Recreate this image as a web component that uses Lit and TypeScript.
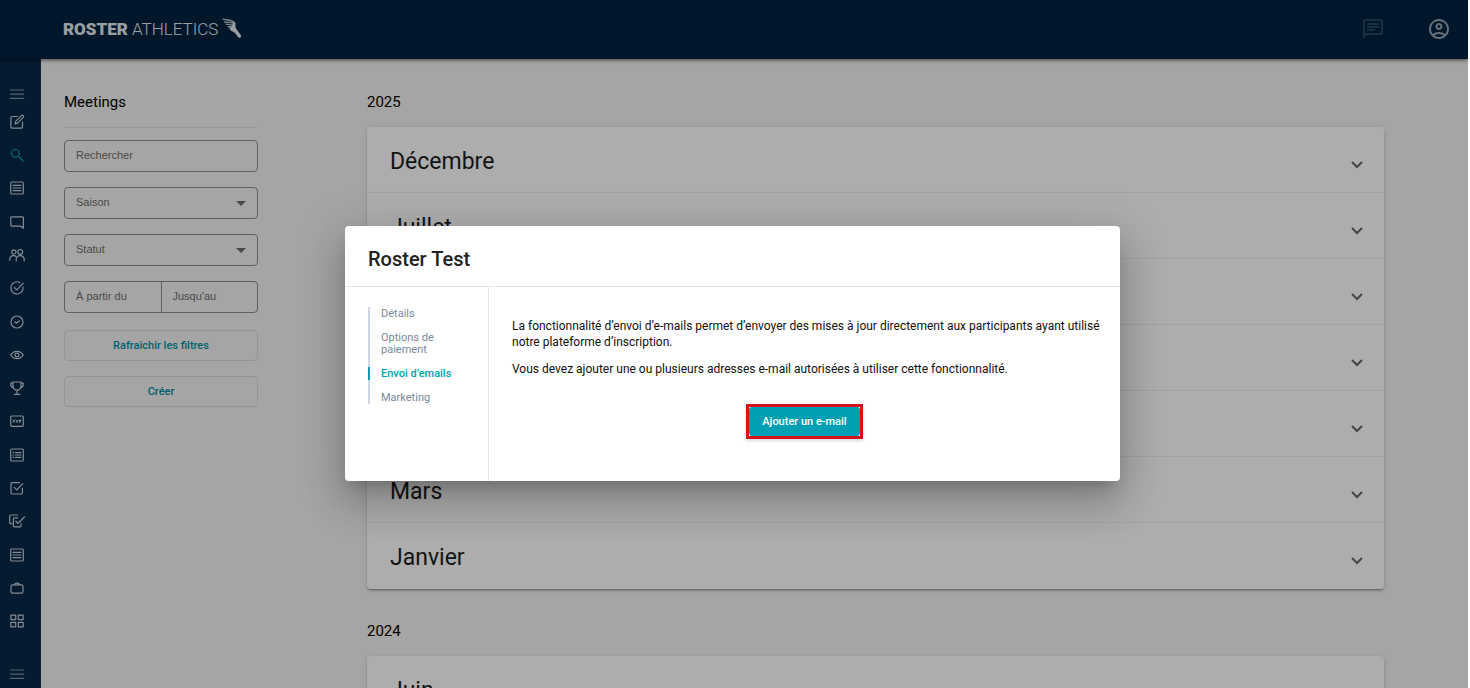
import { LitElement, html, css, svg } from "lit";
import { customElement, property, state } from "lit/decorators.js";
import { classMap } from "lit/directives/class-map.js";

/* Line icons, drawn on a 16 x 16 grid. */
const GLYPHS: Record<string, unknown> = {
  menu: svg`<path d="M1.5 4h13M1.5 8.2h13M1.5 12.4h13"/>`,
  edit: svg`<path d="M8.5 2.5H3.2a1.3 1.3 0 0 0-1.3 1.3v9a1.3 1.3 0 0 0 1.3 1.3h9a1.3 1.3 0 0 0 1.3-1.3V8"/><path d="M12.4 1.6a1.2 1.2 0 0 1 1.8 1.8L8.6 9.2l-2.5.7.6-2.5z"/>`,
  search: svg`<circle cx="6.4" cy="6.4" r="3.9"/><path d="M9.4 9.4l4.6 4.4"/>`,
  list: svg`<rect x="1.7" y="2" width="12.6" height="12" rx="1.3"/><path d="M4 5.4h8M4 8h8M4 10.6h8"/>`,
  chat: svg`<path d="M2.8 2.8h10.6a1 1 0 0 1 1 1v10.4l-2.6-2H2.8a1 1 0 0 1-1-1V3.8a1 1 0 0 1 1-1z"/>`,
  people: svg`<circle cx="4.9" cy="4.9" r="2.1"/><circle cx="11.2" cy="4.9" r="2.4"/><path d="M.7 13.2v-1a3.7 3.7 0 0 1 6.2-2.7M7.2 13.8v-1.2a4 4 0 0 1 8 0v1.2"/>`,
  check: svg`<path d="M14 7.2A6.1 6.1 0 1 1 10.8 2.5"/><path d="M5.4 7.4l2.4 2.4 6.4-6.5"/>`,
  clock: svg`<circle cx="8" cy="8" r="6"/><path d="M5.8 7.8l1.6 1.4 3-2.4"/>`,
  eye: svg`<path d="M1.8 8S4 4.3 8 4.3 14.2 8 14.2 8 12 11.7 8 11.7 1.8 8 1.8 8z"/><circle cx="8" cy="8" r="1.9"/>`,
  trophy: svg`<path d="M4 2h8v4.2a4 4 0 0 1-8 0zM4 3.2H1.8v1.6A2.6 2.6 0 0 0 4.4 7.4M12 3.2h2.2v1.6a2.6 2.6 0 0 1-2.6 2.6M8 10.3v3.8M5.2 14.3h5.6"/>`,
  badge: svg`<rect x="1.7" y="3" width="12.6" height="10.4" rx="1.2"/><path stroke-width="1" d="M4.2 7l1.4 2.2M5.6 7L4.2 9.2M7 7l1 1.4L9 7M8 8.4v1.2M10.4 9.4V7h1.4v1.4h-1.2"/>`,
  bullets: svg`<rect x="1.7" y="2" width="12.6" height="12" rx="1.3"/><path d="M4 5.6h.6M6.4 5.6h5.6M4 8h.6M6.4 8h5.6M4 10.4h.6M6.4 10.4h5.6"/>`,
  task: svg`<path d="M10.4 2.6H3.2A1.2 1.2 0 0 0 2 3.8v9A1.2 1.2 0 0 0 3.2 14h9a1.2 1.2 0 0 0 1.2-1.2V8.4"/><path d="M5.2 7.4l2.6 2.5 6-6.2"/>`,
  tasks: svg`<path d="M8.6 2H1.9A1.2 1.2 0 0 0 .7 3.2v6.2a1.2 1.2 0 0 0 1.2 1.2h1M8.6 4.8H5.4a1 1 0 0 0-1 1v7a1 1 0 0 0 1 1H11a1 1 0 0 0 1-1v-2.2"/><path d="M6.8 8.2l2.2 2 6.4-6.2"/>`,
  case: svg`<rect x="2" y="4.8" width="12" height="8.4" rx="1.6"/><path d="M5.8 4.6c0-2 4.4-2 4.4 0"/>`,
  grid: svg`<path d="M1.9 2.1h4.8v4.5H1.9zM9.3 2.1h4.8v4.5H9.3zM1.9 9.4h4.8v4.5H1.9zM9.3 9.4h4.8v4.5H9.3z"/>`,
};

@customElement("line-icon")
export class LineIcon extends LitElement {
  @property() name = "menu";
  static styles = css`
    :host { display: block; width: 16px; height: 16px; }
    .glyph {
      display: block; width: 100%; height: 100%; fill: none; stroke: currentColor;
      stroke-width: 1.2; stroke-linecap: round; stroke-linejoin: round;
    }
  `;
  render() {
    return html`<svg class="glyph" viewBox="0 0 16 16" aria-hidden="true">${GLYPHS[this.name]}</svg>`;
  }
}

const NAV: [string, string][] = [
  ["edit", "Modifier"], ["search", "Meetings"], ["list", "Listes"], ["chat", "Messages"],
  ["people", "Groupes"], ["check", "Validation"], ["clock", "Horaires"], ["eye", "Aperçu"],
  ["trophy", "Résultats"], ["badge", "Dossards"], ["bullets", "Programme"], ["task", "Tâches"],
  ["tasks", "Inscriptions"], ["list", "Rapports"], ["case", "Gestion"], ["grid", "Applications"],
];

const SEASONS = [
  { year: "2025", months: ["Décembre", "Juillet", "Juin", "Mai", "Avril", "Mars", "Janvier"] },
  { year: "2024", months: ["Juin"] },
];

const TABS = ["Détails", "Options de paiement", "Envoi d’emails", "Marketing"];

@customElement("app-root")
export class AppRoot extends LitElement {
  @state() private tab = 2;

  static styles = css`
    * { box-sizing: border-box; }
    :host {
      display: block; height: 100vh; padding: 0 2px 1px 0; background: #fff;
      font-family: Roboto, "Liberation Sans", sans-serif; font-size: 11px; color: #000;
    }
    h1, h2, h3, p, ul { margin: 0; padding: 0; font-weight: 400; }
    button { font: inherit; color: inherit; background: none; border: 0; padding: 0; cursor: pointer; }
    a { color: inherit; text-decoration: none; }

    .app { position: relative; display: flex; flex-direction: column; height: 100%; overflow: hidden; background: #f3f3f3; }

    .topbar {
      position: relative; z-index: 1; flex: none; display: flex; align-items: center; height: 59px;
      padding: 0 17px 2px 63px; background: #002340; box-shadow: 0 1px 4px rgba(0, 0, 0, 0.6);
    }
    .logo { display: flex; align-items: center; gap: 4px; color: #e4eaf0; font-size: 17px; line-height: 20px; font-weight: 300; }
    .logo-bold { font-weight: 900; }
    .logo-mark { display: block; width: 20px; height: 21px; }
    .top-actions { margin-left: auto; display: flex; gap: 42px; }
    .top-icon { display: block; width: 24px; height: 24px; fill: #98a6b3; }
    .top-icon.dim { fill: #2a465e; }

    .columns { flex: 1; display: flex; min-height: 0; }

    .sidebar {
      flex: none; display: flex; flex-direction: column; width: 41px; padding: 27px 6px 5px 0;
      background: #082846; color: #c3ced9; border-right: 1px solid #20364b;
    }
    .side-list { flex: 1; display: flex; flex-direction: column; list-style: none; padding-top: 3px; }
    .side-item { flex: 1; display: flex; }
    .side-link { flex: 1; display: flex; align-items: center; justify-content: center; }
    .side-link.active { color: #00a0b4; }
    .side-toggle { display: flex; align-items: center; justify-content: center; height: 16px; color: #7d90a3; }
    .side-toggle.bottom { height: 18px; margin-top: 27px; }

    .content { flex: 1; display: flex; gap: 109px; min-width: 0; padding: 33px 84px 0 23px; }

    .filters { flex: none; width: 194px; display: flex; flex-direction: column; gap: 15px; }
    .section-title { font-size: 15px; line-height: 20px; }
    .filters .section-title { padding-bottom: 15px; border-bottom: 1px solid #e0e0e0; margin-bottom: -3px; }
    .field { position: relative; display: flex; height: 32px; border: 1px solid #8e8e8e; border-radius: 4px; }
    .control {
      flex: 1; min-width: 0; width: 0; height: 28px; padding: 0 11px; border: 0; background: none; outline: 0;
      appearance: none; font: 11px "Liberation Sans", Arial, sans-serif; color: #6e6e6e;
    }
    .control::placeholder { color: #6e6e6e; opacity: 1; }
    .control.second { height: 30px; padding-bottom: 2px; border-left: 1px solid #8e8e8e; }
    .caret { position: absolute; right: 11px; top: 13px; width: 10px; height: 5px; fill: #6e6e6e; pointer-events: none; }
    .actions { display: flex; flex-direction: column; gap: 15px; padding-top: 2px; }
    .ghost { height: 31px; border: 1px solid #dadada; border-radius: 4px; color: #008fa3; font-weight: 500; }

    .seasons { flex: 1; min-width: 0; display: flex; flex-direction: column; gap: 32px; }
    .season { display: flex; flex-direction: column; gap: 15px; }
    .card {
      background: #fff; border-radius: 4px;
      box-shadow: 0 3px 1px -2px rgba(0, 0, 0, 0.2), 0 2px 2px rgba(0, 0, 0, 0.14), 0 1px 5px rgba(0, 0, 0, 0.12);
    }
    .month { height: 66px; }
    .month:not(:last-child) { box-shadow: inset 0 -1px #f1f1f1; }
    .month-toggle {
      display: flex; align-items: center; justify-content: space-between; width: 100%; height: 100%;
      padding: 3px 20px 0 23px; font-size: 23px; line-height: 32px; color: #1c1c1c; text-align: left;
    }
    .chevron { width: 14px; height: 16px; fill: none; stroke: #666; stroke-width: 2; }

    .backdrop {
      position: absolute; inset: 0; z-index: 2; display: flex; align-items: center; justify-content: center;
      padding: 18px 3px 0 0; background: rgba(0, 0, 0, 0.32);
    }
    .dialog {
      display: flex; flex-direction: column; width: 775px; max-width: 80vw; background: #fff; border-radius: 4px;
      box-shadow: 0 11px 15px -7px rgba(0, 0, 0, 0.2), 0 24px 38px 3px rgba(0, 0, 0, 0.14), 0 9px 46px 8px rgba(0, 0, 0, 0.12);
    }
    .dialog-title {
      padding: 21px 23px 15px; border-bottom: 1px solid #e4e4e4; font-size: 20px; line-height: 24px;
      font-weight: 500; color: #212121;
    }
    .dialog-body { display: flex; }
    .dialog-side { flex: none; width: 144px; padding: 20px 23px 77px; border-right: 1px solid #e4e4e4; }
    .tabs { display: flex; flex-direction: column; gap: 11px; list-style: none; box-shadow: inset 2px 0 #cfd8e2; }
    .tab { display: block; width: 100%; padding: 1px 0 0 13px; text-align: left; line-height: 12px; color: #78899a; }
    .tab.active { color: #00a0b4; font-weight: 500; box-shadow: inset 2px 0 #00a0b4; }
    .panel {
      flex: 1; display: flex; flex-direction: column; gap: 11px; padding: 31px 16px 0 23px;
      font-size: 12px; line-height: 16px; color: #111;
    }
    .highlight { align-self: center; display: flex; margin: 16px 0 0 -7px; border: 3px solid #d8121b; box-shadow: 0 2px 3px rgba(0, 0, 0, 0.15); }
    .primary { height: 29px; padding: 2px 13px 0; border-radius: 3px; background: #009fb3; color: #fff; font-size: 11px; font-weight: 500; }
  `;

  private season(s: { year: string; months: string[] }) {
    return html`
      <section class="season">
        <h2 class="section-title">${s.year}</h2>
        <div class="card">
          ${s.months.map((m) => html`
            <h3 class="month">
              <button class="month-toggle" aria-expanded="false">
                ${m}
                <svg class="chevron" viewBox="0 0 14 16" aria-hidden="true"><path d="M2 8l5 5 5-5"/></svg>
              </button>
            </h3>`)}
        </div>
      </section>`;
  }

  private select(label: string) {
    return html`
      <div class="field">
        <select class="control" aria-label=${label}><option>${label}</option></select>
        <svg class="caret" viewBox="0 0 10 5" aria-hidden="true"><path d="M0 0h10L5 5z"/></svg>
      </div>`;
  }

  render() {
    return html`
      <div class="app">
        <header class="topbar">
          <a class="logo" href="#">
            <span><span class="logo-bold">ROSTER</span> ATHLETICS</span>
            <svg class="logo-mark" viewBox="0 0 20 21" aria-hidden="true">
              <path fill="#e4eaf0" d="M11 2.8l2.3 1.8c.3 2.2-.3 4 .7 5.800l4.900 6.800c.6 1-.2 2.800-1.500 2.700-2.200-1.400-3.200-3.900-5.200-5.600-1.800-1.400-4.400-1.700-4.600-3.900.5-1.400 2.600-2.600 3.100-4.400z"/>
              <path fill="none" stroke="#b9c5d0" stroke-width="1.3" d="M.6 1.2c3.200.9 7.200.2 11.200 2.600M2 3.800c3 .8 6 .2 9.400 1.400M3.600 6.200c2.600.6 4.800.2 7.200.8M5.600 8.600c1.600.3 2.800.1 4.400.2"/>
            </svg>
          </a>
          <div class="top-actions">
            <button aria-label="Messages">
              <svg class="top-icon dim" viewBox="0 0 24 24"><path d="M4 4h16v12H5.200L4 17.200V4m0-2c-1.100 0-2 .9-2 2v18l4-4h14c1.100 0 2-.9 2-2V4c0-1.100-.9-2-2-2H4zm2 10h8v2H6v-2zm0-3h12v2H6V9zm0-3h12v2H6V6z"/></svg>
            </button>
            <button aria-label="Compte">
              <svg class="top-icon" viewBox="0 0 24 24"><path d="M12 2C6.480 2 2 6.480 2 12s4.480 10 10 10 10-4.480 10-10S17.520 2 12 2zM7.350 18.500C8.660 17.560 10.260 17 12 17s3.340.56 4.650 1.500C15.340 19.440 13.740 20 12 20s-3.340-.56-4.650-1.500zm10.790-1.380C16.450 15.800 14.320 15 12 15s-4.450.8-6.140 2.120C4.700 15.730 4 13.950 4 12c0-4.420 3.580-8 8-8s8 3.580 8 8c0 1.950-.7 3.730-1.860 5.120zM12 6c-1.930 0-3.500 1.570-3.500 3.500S10.070 13 12 13s3.500-1.570 3.500-3.500S13.930 6 12 6zm0 5c-.83 0-1.500-.67-1.500-1.500S11.170 8 12 8s1.500.67 1.500 1.500S12.830 11 12 11z"/></svg>
            </button>
          </div>
        </header>

        <div class="columns">
          <nav class="sidebar" aria-label="Navigation">
            <button class="side-toggle" aria-label="Menu"><line-icon name="menu"></line-icon></button>
            <ul class="side-list">
              ${NAV.map(([icon, label]) => html`
                <li class="side-item">
                  <a class=${classMap({ "side-link": true, active: icon === "search" })} href="#" aria-label=${label}>
                    <line-icon name=${icon}></line-icon>
                  </a>
                </li>`)}
            </ul>
            <button class="side-toggle bottom" aria-label="Déplier"><line-icon name="menu"></line-icon></button>
          </nav>

          <main class="content">
            <form class="filters">
              <h1 class="section-title">Meetings</h1>
              <div class="field"><input class="control" type="text" placeholder="Rechercher" aria-label="Rechercher" /></div>
              ${this.select("Saison")} ${this.select("Statut")}
              <div class="field">
                <input class="control" type="text" placeholder="À partir du" aria-label="À partir du" />
                <input class="control second" type="text" placeholder="Jusqu'au" aria-label="Jusqu'au" />
              </div>
              <div class="actions">
                <button class="ghost" type="button">Rafraîchir les filtres</button>
                <button class="ghost" type="button">Créer</button>
              </div>
            </form>
            <div class="seasons">${SEASONS.map((s) => this.season(s))}</div>
          </main>
        </div>

        <div class="backdrop">
          <div class="dialog" role="dialog" aria-modal="true" aria-labelledby="dialog-title">
            <h2 class="dialog-title" id="dialog-title">Roster Test</h2>
            <div class="dialog-body">
              <div class="dialog-side">
                <ul class="tabs">
                  ${TABS.map((t, i) => html`
                    <li><button class=${classMap({ tab: true, active: i === this.tab })} @click=${() => (this.tab = i)}>${t}</button></li>`)}
                </ul>
              </div>
              <div class="panel">
                <p>La fonctionnalité d’envoi d’e-mails permet d’envoyer des mises à jour directement aux participants ayant utilisé notre plateforme d’inscription.</p>
                <p>Vous devez ajouter une ou plusieurs adresses e-mail autorisées à utiliser cette fonctionnalité.</p>
                <div class="highlight"><button class="primary">Ajouter un e-mail</button></div>
              </div>
            </div>
          </div>
        </div>
      </div>`;
  }
}
